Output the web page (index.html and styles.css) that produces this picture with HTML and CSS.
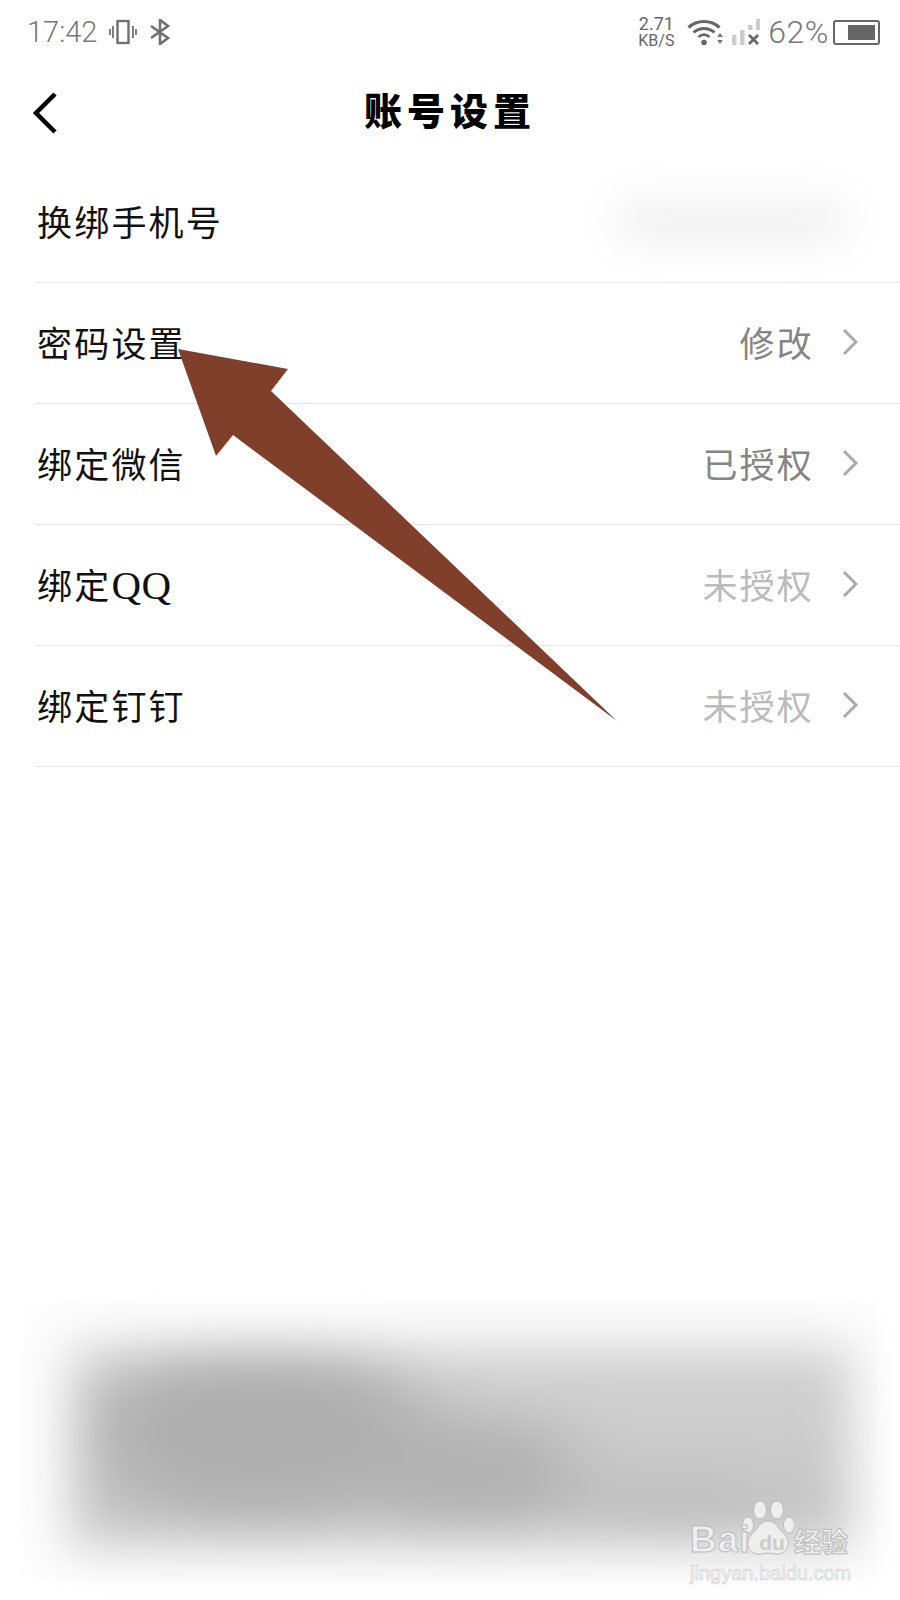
FILE: index.html
```html
<!DOCTYPE html>
<html>
<head>
  <title>账号设置</title>
  <link rel="stylesheet" href="styles.css">
</head>
<body>
  <div class="page">
    <div class="status">
      <div class="status-left">
        <span class="time">17:42</span>
        <svg class="ico" width="28" height="26" viewBox="0 0 28 26" fill="none" stroke="#707070">
          <rect x="8.500" y="2" width="11" height="22" stroke-width="2.400"/>
          <path d="M4 7v12M1 10v6M24 7v12M27 10v6" stroke-width="1.800"/>
        </svg>
        <svg class="ico bt" width="22" height="26" viewBox="0 0 22 26" fill="none" stroke="#707070" stroke-width="2.600">
          <path d="M2 7l17 12-8 6V1l8 6L2 19"/>
        </svg>
      </div>
      <div class="status-right">
        <div class="speed"><span>2.71</span><span class="speed-unit">KB/S</span></div>
        <svg class="ico wifi" width="36" height="28" viewBox="0 0 36 28" fill="none" stroke="#666">
          <path d="M1.500 9.500C10 1.500 24 1.500 32.500 9.500" stroke-width="3.200"/>
          <path d="M6.500 14.500C12.500 9 21.500 9 27.500 14.500" stroke-width="3"/>
          <path d="M11.500 19C15 16 19 16 22.500 19" stroke-width="2.800"/>
          <circle cx="17" cy="24.500" r="2.800" fill="#666" stroke="none"/>
          <path d="M30 19l3-4 3 4zM30 22l3 4 3-4z" fill="#777" stroke="none"/>
        </svg>
        <svg class="ico signal" width="28" height="26" viewBox="0 0 28 26">
          <rect x="0" y="16" width="4.500" height="10" fill="#ccc"/>
          <rect x="8" y="11" width="4.500" height="15" fill="#ccc"/>
          <rect x="16" y="6" width="4.500" height="5" fill="#ccc"/>
          <rect x="24" y="0" width="4.500" height="11" fill="#ccc"/>
          <path d="M17 16l9 9M26 16l-9 9" stroke="#666" stroke-width="2.600"/>
        </svg>
        <span class="batt-num">62%</span>
        <div class="battery"><div class="battery-fill"></div></div>
      </div>
    </div>

    <div class="header">
      <svg class="back" width="28" height="42" viewBox="0 0 28 42" fill="none" stroke="#000" stroke-width="4.500">
        <path d="M24 2L5 21l19 19"/>
      </svg>
      <h1 class="title">账号设置</h1>
    </div>

    <div class="list">
      <div class="row">
        <span class="row-name">换绑手机号</span>
        <div class="phone-blur"></div>
      </div>
      <div class="row">
        <span class="row-name">密码设置</span>
        <div class="row-right">
          <span class="val val-dark">修改</span>
          <svg class="chev" width="16" height="28" viewBox="0 0 16 28" fill="none" stroke="#aaa" stroke-width="3"><path d="M2 2l12 12L2 26"/></svg>
        </div>
      </div>
      <div class="row">
        <span class="row-name">绑定微信</span>
        <div class="row-right">
          <span class="val val-dark">已授权</span>
          <svg class="chev" width="16" height="28" viewBox="0 0 16 28" fill="none" stroke="#aaa" stroke-width="3"><path d="M2 2l12 12L2 26"/></svg>
        </div>
      </div>
      <div class="row">
        <span class="row-name">绑定<span class="latin">QQ</span></span>
        <div class="row-right">
          <span class="val val-light">未授权</span>
          <svg class="chev" width="16" height="28" viewBox="0 0 16 28" fill="none" stroke="#aaa" stroke-width="3"><path d="M2 2l12 12L2 26"/></svg>
        </div>
      </div>
      <div class="row">
        <span class="row-name">绑定钉钉</span>
        <div class="row-right">
          <span class="val val-light">未授权</span>
          <svg class="chev" width="16" height="28" viewBox="0 0 16 28" fill="none" stroke="#aaa" stroke-width="3"><path d="M2 2l12 12L2 26"/></svg>
        </div>
      </div>
    </div>

    <div class="bottom-haze">
      <div class="bottom-blur"></div>
    </div>

    <!-- annotation arrow on top of the list -->
    <svg class="arrow" width="900" height="800" viewBox="0 0 900 800">
      <polygon points="178,349 288,369 271,391 617,721 233,435 216,456" fill="#7f3f2b"/>
    </svg>

    <div class="watermark">
      <svg class="paw" width="52" height="56" viewBox="0 0 52 56" fill="#eee" stroke="#bbb" stroke-width="1">
        <ellipse cx="18" cy="10" rx="6.500" ry="9"/>
        <ellipse cx="35" cy="10" rx="6.500" ry="9"/>
        <ellipse cx="6" cy="25" rx="5.500" ry="8"/>
        <ellipse cx="47" cy="25" rx="5.500" ry="8"/>
        <path d="M26 21c8 0 10 8 17 14 7 8 2 20-9 19-3 0-5-1-8-1s-5 1-8 1C7 55 2 43 9 35c7-6 9-14 17-14z"/>
      </svg>
      <div class="wm-top">
        <span class="wm-bai">Bai</span>
        <span class="wm-du">du</span>
        <span class="wm-cn">经验</span>
      </div>
      <div class="wm-url">jingyan.baidu.com</div>
    </div>
  </div>
</body>
</html>
```

FILE: styles.css
```css
* { box-sizing: border-box; }
html, body { margin: 0; padding: 0; }
body { background: #fff; font-family: "Noto Sans CJK SC", "Noto Sans", sans-serif; }

.page { position: relative; width: 900px; height: 1600px; overflow: hidden; display: flex; flex-direction: column; }

/* status bar */
.status { height: 62px; padding: 2px 20px 0 27px; display: flex; justify-content: space-between; align-items: center; color: #777; font-family: Roboto, sans-serif; font-weight: 300; }
.status-left, .status-right { display: flex; align-items: center; }
.time { font-size: 29px; width: 82px; }
.bt { margin-left: 12px; }
.speed { display: flex; flex-direction: column; align-items: center; font-size: 18px; line-height: 17px; font-weight: 400; color: #666; width: 42px; }
.speed-unit { font-size: 16px; }
.wifi { margin-left: 10px; }
.signal { margin-left: 9px; }
.batt-num { font-size: 32px; margin-left: 8px; letter-spacing: 0.5px; }
.battery { width: 47px; height: 25px; margin-left: 4px; border: 2.500px solid #666; border-radius: 3px; padding: 3px; display: flex; justify-content: flex-end; }
.battery-fill { width: 27px; background: #666; }

/* title */
.header { height: 100px; padding-bottom: 7px; display: flex; align-items: center; justify-content: center; position: relative; }
.back { position: absolute; left: 31px; top: 30px; }
.title { margin: 0; font-size: 38px; font-weight: 900; letter-spacing: 5px; color: #000; }

/* rows */
.list { margin-left: 35px; }
.row { height: 121px; border-bottom: 1px solid #e6e6e6; padding: 0 42px 3px 2px; display: flex; justify-content: space-between; align-items: center; }
.row-name { font-size: 35px; letter-spacing: 2.200px; color: #111; }
.latin { font-family: "Liberation Serif", serif; font-size: 41px; letter-spacing: 0.500px; }
.row-right { display: flex; align-items: center; gap: 28px; }
.val { font-size: 35px; letter-spacing: 2.200px; }
.val-dark { color: #858585; }
.val-light { color: #bbb; }
.phone-blur { width: 236px; height: 46px; margin-right: 8px; background: #f2f2f2; border-radius: 24px; filter: blur(20px); }

/* blurred card at the bottom */
.bottom-haze { margin: auto 0 20px 22px; width: 856px; height: 280px; background: #fdfdfd; padding: 46px 0 0 48px; filter: blur(2px); }
.bottom-blur {
  width: 782px; height: 200px;
  background:
    radial-gradient(ellipse 210px 110px at 190px 85px, #afafaf 60%, transparent 100%),
    radial-gradient(ellipse 150px 75px at 400px 125px, #b2b2b2 45%, transparent 100%),
    radial-gradient(ellipse 130px 40px at 600px 160px, #bdbdbd 40%, transparent 100%),
    linear-gradient(#d2d2d2, #c4c4c4);
  filter: blur(24px);
}

.arrow { position: absolute; left: 0; top: 0; }

/* watermark */
.watermark { position: absolute; left: 690px; top: 1500px; width: 164px; }
.paw { position: absolute; left: 52px; top: 0; }
.wm-top { position: absolute; left: 0; top: 20px; width: 164px; height: 40px; display: flex; align-items: center; color: #efefef; -webkit-text-stroke: 1px #bbb; }
.wm-bai { font-family: "Liberation Sans", sans-serif; font-weight: 700; font-size: 37px; letter-spacing: 1px; width: 60px; }
.wm-du { font-family: "Liberation Sans", sans-serif; font-weight: 700; font-size: 21px; color: #ccc; -webkit-text-stroke: 0; width: 44px; text-align: center; padding-top: 6px; }
.wm-cn { font-size: 27px; font-weight: 700; }
.wm-url { position: absolute; left: 0; top: 62px; font-family: "Liberation Sans", sans-serif; font-size: 20px; color: #f8f8f8; -webkit-text-stroke: 0.600px #ccc; white-space: nowrap; }
```
